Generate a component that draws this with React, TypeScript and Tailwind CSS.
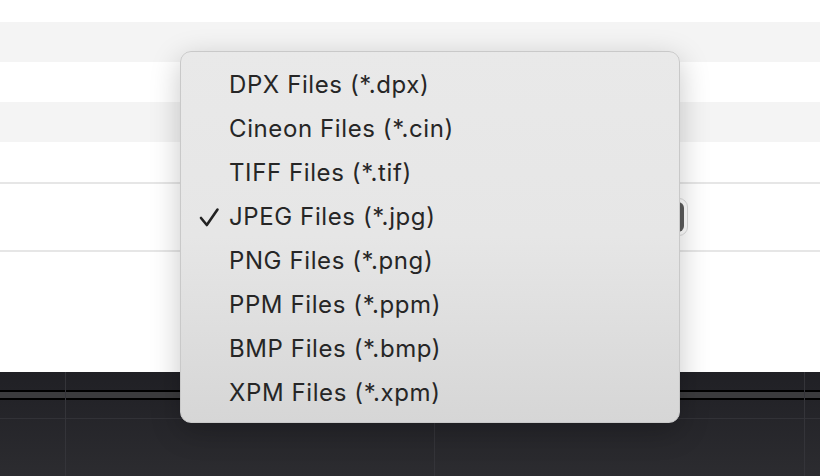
import React from "react";

const items = [
  "DPX Files (*.dpx)",
  "Cineon Files (*.cin)",
  "TIFF Files (*.tif)",
  "JPEG Files (*.jpg)",
  "PNG Files (*.png)",
  "PPM Files (*.ppm)",
  "BMP Files (*.bmp)",
  "XPM Files (*.xpm)",
];

export default function App() {
  return (
    <div
      className="relative w-[820px] h-[476px] overflow-hidden bg-white"
      style={{ fontFamily: "Inter, 'Noto Sans', sans-serif" }}
    >
      <div className="flex flex-col">
        <div className="h-[22px] bg-white" />
        <div className="h-[40px] bg-[#f4f4f4]" />
        <div className="h-[40px] bg-white" />
        <div className="h-[40px] bg-[#f4f4f4]" />
        <div className="h-[40px] bg-white" />
        <div className="h-[2px] bg-[#e6e6e6]" />
        <div className="h-[66px] bg-white flex justify-end pr-[132px] items-center">
          <div className="w-[150px] h-[38px] rounded-[9px] border border-[#dcdcdc] bg-white p-[3px] flex justify-end">
            <div className="w-[22px] h-full rounded-[6px] bg-[#5c5c5c]" />
          </div>
        </div>
        <div className="h-[2px] bg-[#e6e6e6]" />
        <div className="h-[120px] bg-white" />
        <div className="relative h-[104px] bg-gradient-to-b from-[#202025] to-[#2c2c30] flex flex-col">
          <div className="h-[18px]" />
          <div className="h-[2px] bg-black" />
          <div className="h-[6px] bg-[#3b3b3d]" />
          <div className="h-[2px] bg-black" />
          <div className="h-[18px]" />
          <div className="h-[1px] bg-[#323237]" />
          <div className="absolute left-[65px] top-0 bottom-0 w-[1px] bg-[#343439]" />
          <div className="absolute left-[434px] top-0 bottom-0 w-[1px] bg-[#343439]" />
          <div className="absolute left-[804px] top-0 bottom-0 w-[1px] bg-[#343439]" />
        </div>
      </div>

      <div className="absolute left-[180px] top-[51px] w-[500px] h-[372px] rounded-[11px] border border-[#c9c9c9] bg-gradient-to-b from-[#e9e9e9] via-[#e6e6e6] to-[#d6d6d6] shadow-[0_8px_30px_rgba(0,0,0,0.22)] pt-[11px] pb-[8px]">
        {items.map((t, i) => (
          <div key={t} className="relative h-[44px] flex items-center pl-[48px] text-[24px] text-[#262626] tracking-[0.6px]">
            {i === 3 && (
              <svg className="absolute left-[18px] top-[12px]" width="21" height="21" viewBox="0 0 21 21">
                <path d="M2 11 L7.8 18 L18.5 2.5" fill="none" stroke="#222" strokeWidth="2.6" strokeLinecap="round" strokeLinejoin="round" />
              </svg>
            )}
            {t}
          </div>
        ))}
      </div>
    </div>
  );
}
